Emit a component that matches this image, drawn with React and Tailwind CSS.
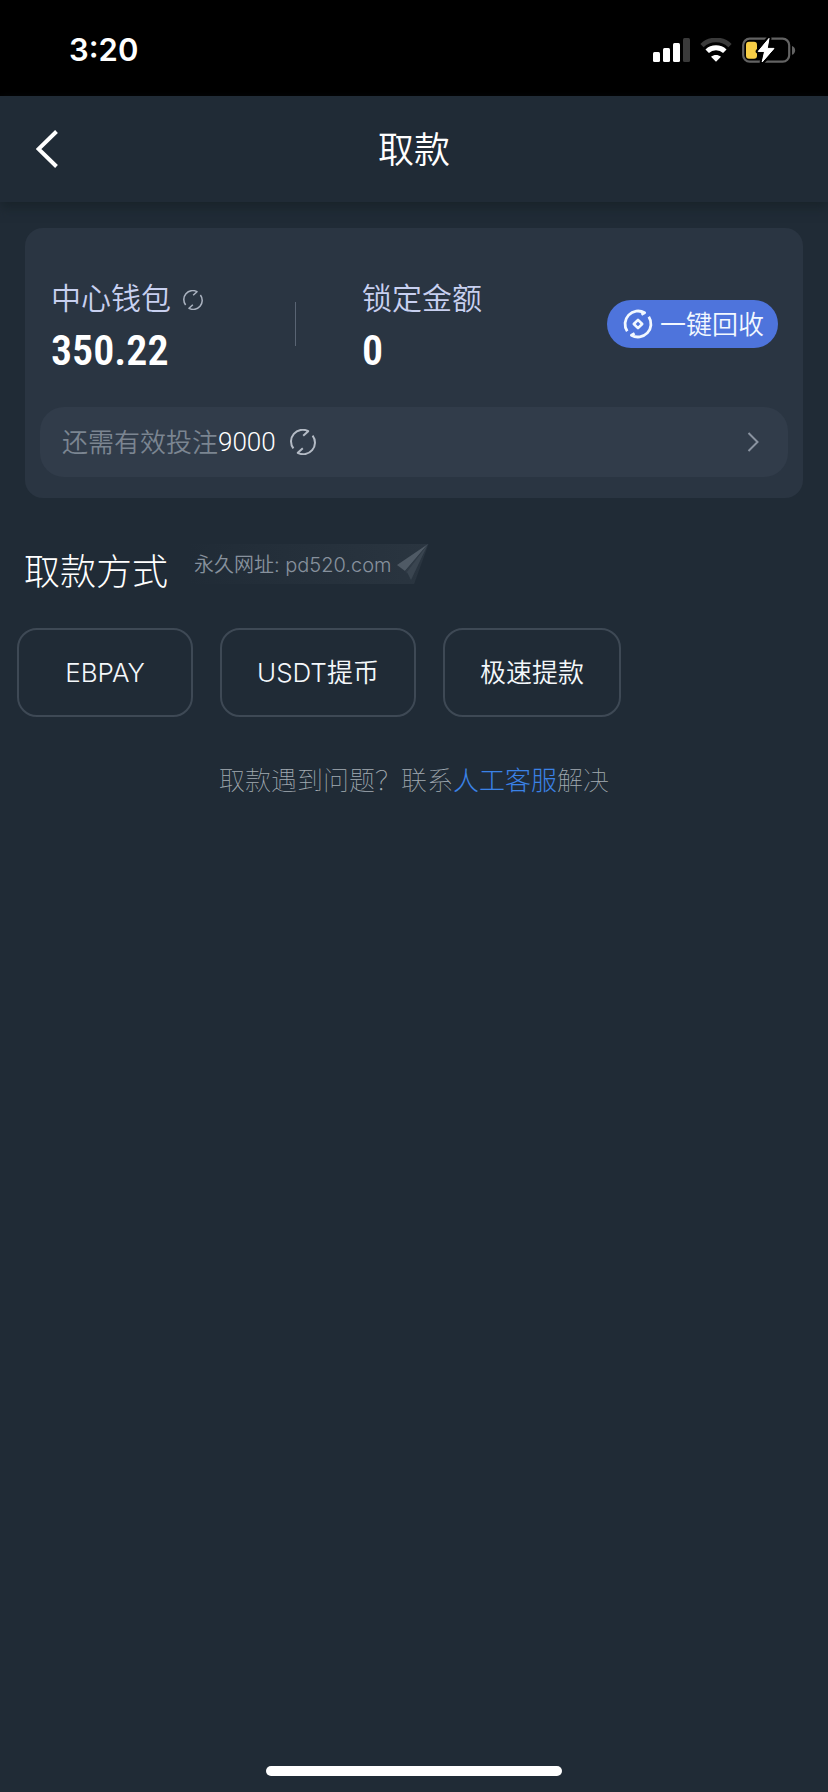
const METHODS = ["EBPAY", "USDT提币", "极速提款"];

function SignalIcon() {
  return (
    <svg width="37" height="24" viewBox="0 0 37 24" aria-hidden="true">
      <rect x="0" y="14" width="7" height="10" rx="1.5" fill="#fff" />
      <rect x="10" y="10" width="7" height="14" rx="1.5" fill="#fff" />
      <rect x="20" y="5" width="7" height="19" rx="1.5" fill="#fff" />
      <rect x="30" y="0" width="7" height="24" rx="1.5" fill="#3a3a3a" />
    </svg>
  );
}

function WifiIcon() {
  return (
    <svg width="32" height="24" viewBox="0 0 32 24" fill="none" aria-hidden="true">
      <path d="M2 7.6 C9.5 0 22.5 0 30 7.6" stroke="#3a3a3a" strokeWidth="4.6" />
      <path d="M7.2 13.2 C12 8.6 20 8.6 24.8 13.2" stroke="#fff" strokeWidth="5" />
      <path d="M16 23.8 L11 18.8 C14 16.3 18 16.3 21 18.8 Z" fill="#fff" />
    </svg>
  );
}

function BatteryIcon() {
  return (
    <svg width="54" height="28" viewBox="0 0 54 28" fill="none" aria-hidden="true">
      <rect x="1.2" y="2.7" width="46" height="23" rx="6.5" stroke="#636363" strokeWidth="2.2" />
      <path d="M50 10 C54.2 11.5 54.2 17.3 50 18.8 Z" fill="#636363" />
      <rect x="4" y="5.7" width="11" height="17" rx="3" fill="#f7ce46" />
      <path
        d="M27 2.4 L16.2 15.4 H22.6 L20.2 26 L32 12.4 H25.2 Z"
        fill="#fff"
        stroke="#000"
        strokeWidth="5"
        paintOrder="stroke"
        strokeLinejoin="round"
      />
      <path d="M27 2.4 L16.2 15.4 H22.6 L20.2 26 L32 12.4 H25.2 Z" fill="#fff" stroke="#fff" strokeWidth="1" strokeLinejoin="round" />
    </svg>
  );
}

function RefreshIcon({ className }) {
  return (
    <svg className={className} viewBox="0 0 26 26" fill="none" stroke="currentColor" strokeWidth="2" aria-hidden="true">
      <path d="M3.4 19.4 A11.6 11.6 0 0 1 18.2 2.2 L13.2 6.8" strokeLinejoin="round" />
      <path d="M22.6 6.6 A11.6 11.6 0 0 1 7.8 23.8 L12.8 19.2" strokeLinejoin="round" />
    </svg>
  );
}

function RecycleIcon() {
  return (
    <svg className="size-[30px]" viewBox="0 0 30 30" fill="none" stroke="currentColor" strokeWidth="2.8" aria-hidden="true">
      <path d="M4.2 22.2 A13 13 0 0 1 21.6 3.8 L18.4 5.6" strokeLinejoin="round" />
      <path d="M25.8 7.8 A13 13 0 0 1 8.4 26.2 L11.6 24.4" strokeLinejoin="round" />
      <path d="M15 10.8 L19.2 15 L15 19.2 L10.8 15 Z" strokeWidth="2.6" strokeLinejoin="round" />
    </svg>
  );
}

function PlaneIcon() {
  return (
    <svg width="32" height="40" viewBox="0 0 32 40" aria-hidden="true">
      <path d="M31 0 L0 21 L8 27 Z" fill="#4f5a65" />
      <path d="M31 0 L8 27 L10 30 Z" fill="#303b46" />
      <path d="M31 0 L10 28 L14 36 Z" fill="#3a4550" />
    </svg>
  );
}

export default function App() {
  return (
    <div className="flex min-h-screen flex-col bg-[#202b36] font-['Inter','Noto_Sans_CJK_SC',sans-serif] font-light text-white">
      <div className="flex h-24 items-center justify-between bg-black pt-1 pr-8 pl-[69px]">
        <span className="text-[31px] leading-10 font-semibold">3:20</span>
        <div className="flex items-center gap-[10px]">
          <SignalIcon />
          <WifiIcon />
          <BatteryIcon />
        </div>
      </div>

      <header className="grid h-[106px] grid-cols-[1fr_auto_1fr] items-center px-9 shadow-[0_6px_10px_#19242b]">
        <button type="button" aria-label="返回" className="w-6">
          <svg width="22" height="38" viewBox="0 0 22 38" fill="none" aria-hidden="true">
            <path d="M20.5 1.5 L2.5 19 L20.5 36.5" stroke="#fff" strokeWidth="4" />
          </svg>
        </button>
        <h1 className="pt-[2px] text-4xl font-[350]">取款</h1>
      </header>

      <main className="flex flex-1 flex-col">
        <section className="mx-[25px] mt-[26px] rounded-[18px] bg-[#2a3542] px-[15px] pt-11 pb-[21px]">
          <div className="flex items-center pr-[10px] pl-[11px]">
            <div className="w-[244px]">
              <div className="flex h-[52px] items-center gap-3 text-[#c8d0f0]">
                <span className="text-3xl font-[350]">中心钱包</span>
                <button type="button" aria-label="刷新余额" className="pt-1 text-[#aab2bf]">
                  <RefreshIcon className="size-5" />
                </button>
              </div>
              <div className="h-[52px] font-['Roboto_Condensed','Roboto',sans-serif] text-[42px] leading-[54px] font-semibold">350.22</div>
            </div>
            <div className="h-11 w-px bg-[#596473]" />
            <div className="ml-[66px] flex-1">
              <div className="flex h-[52px] items-center text-3xl font-[350] text-[#c8d0f0]">锁定金额</div>
              <div className="h-[52px] font-['Roboto_Condensed','Roboto',sans-serif] text-[42px] leading-[54px] font-semibold">0</div>
            </div>
            <button type="button" className="flex h-12 items-center gap-[7px] rounded-full bg-[#4e74dc] pr-[14px] pl-4 text-[26px] font-[350] text-[#f2f8ff]">
              <RecycleIcon />
              一键回收
            </button>
          </div>

          <div className="mt-[31px] flex h-[70px] items-center rounded-3xl bg-[#313c4a] pr-[29px] pl-[22px] text-[26px]">
            <span className="font-[350] text-[#7b8591]">还需有效投注</span>
            <span className="font-['Roboto',sans-serif]">9000</span>
            <button type="button" aria-label="刷新投注" className="ml-[14px] text-[#b4bbc5]">
              <RefreshIcon className="size-[26px]" />
            </button>
            <button type="button" aria-label="查看详情" className="ml-auto">
              <svg width="12" height="20" viewBox="0 0 12 20" fill="none" aria-hidden="true">
                <path d="M1.5 1 L10.5 10 L1.5 19" stroke="#8a93a0" strokeWidth="2" />
              </svg>
            </button>
          </div>
        </section>

        <div className="flex items-start pt-[46px] pl-6">
          <h2 className="mt-[5px] text-4xl leading-[46px] font-light">取款方式</h2>
          <div className="ml-5 flex h-10 items-center gap-[5px] bg-linear-to-r from-[#202b36] to-[#2a3540] pl-[6px] text-xl text-[#87919d] [clip-path:polygon(0_0,100%_0,94%_100%,0_100%)]">
            <span className="pt-[2px] font-[350]">永久网址: pd520.com</span>
            <PlaneIcon />
          </div>
        </div>

        <div className="mt-[33px] flex flex-wrap gap-[27px] px-[17px]">
          {METHODS.map((name) => (
            <button
              key={name}
              type="button"
              className="h-[89px] min-w-44 rounded-[20px] border-2 border-[#3e4955] px-[35px] text-[26px] font-[350] text-[#f4f8fb]"
            >
              {name}
            </button>
          ))}
        </div>

        <p className="mt-[46px] text-center text-[26px] leading-9 font-thin text-[#a3abb3]">
          取款遇到问题？联系
          <a href="#service" className="font-light text-[#3b82e6]">人工客服</a>
          解决
        </p>
      </main>

      <div className="mx-auto mb-4 h-[10px] w-[296px] rounded-full bg-white" />
    </div>
  );
}
